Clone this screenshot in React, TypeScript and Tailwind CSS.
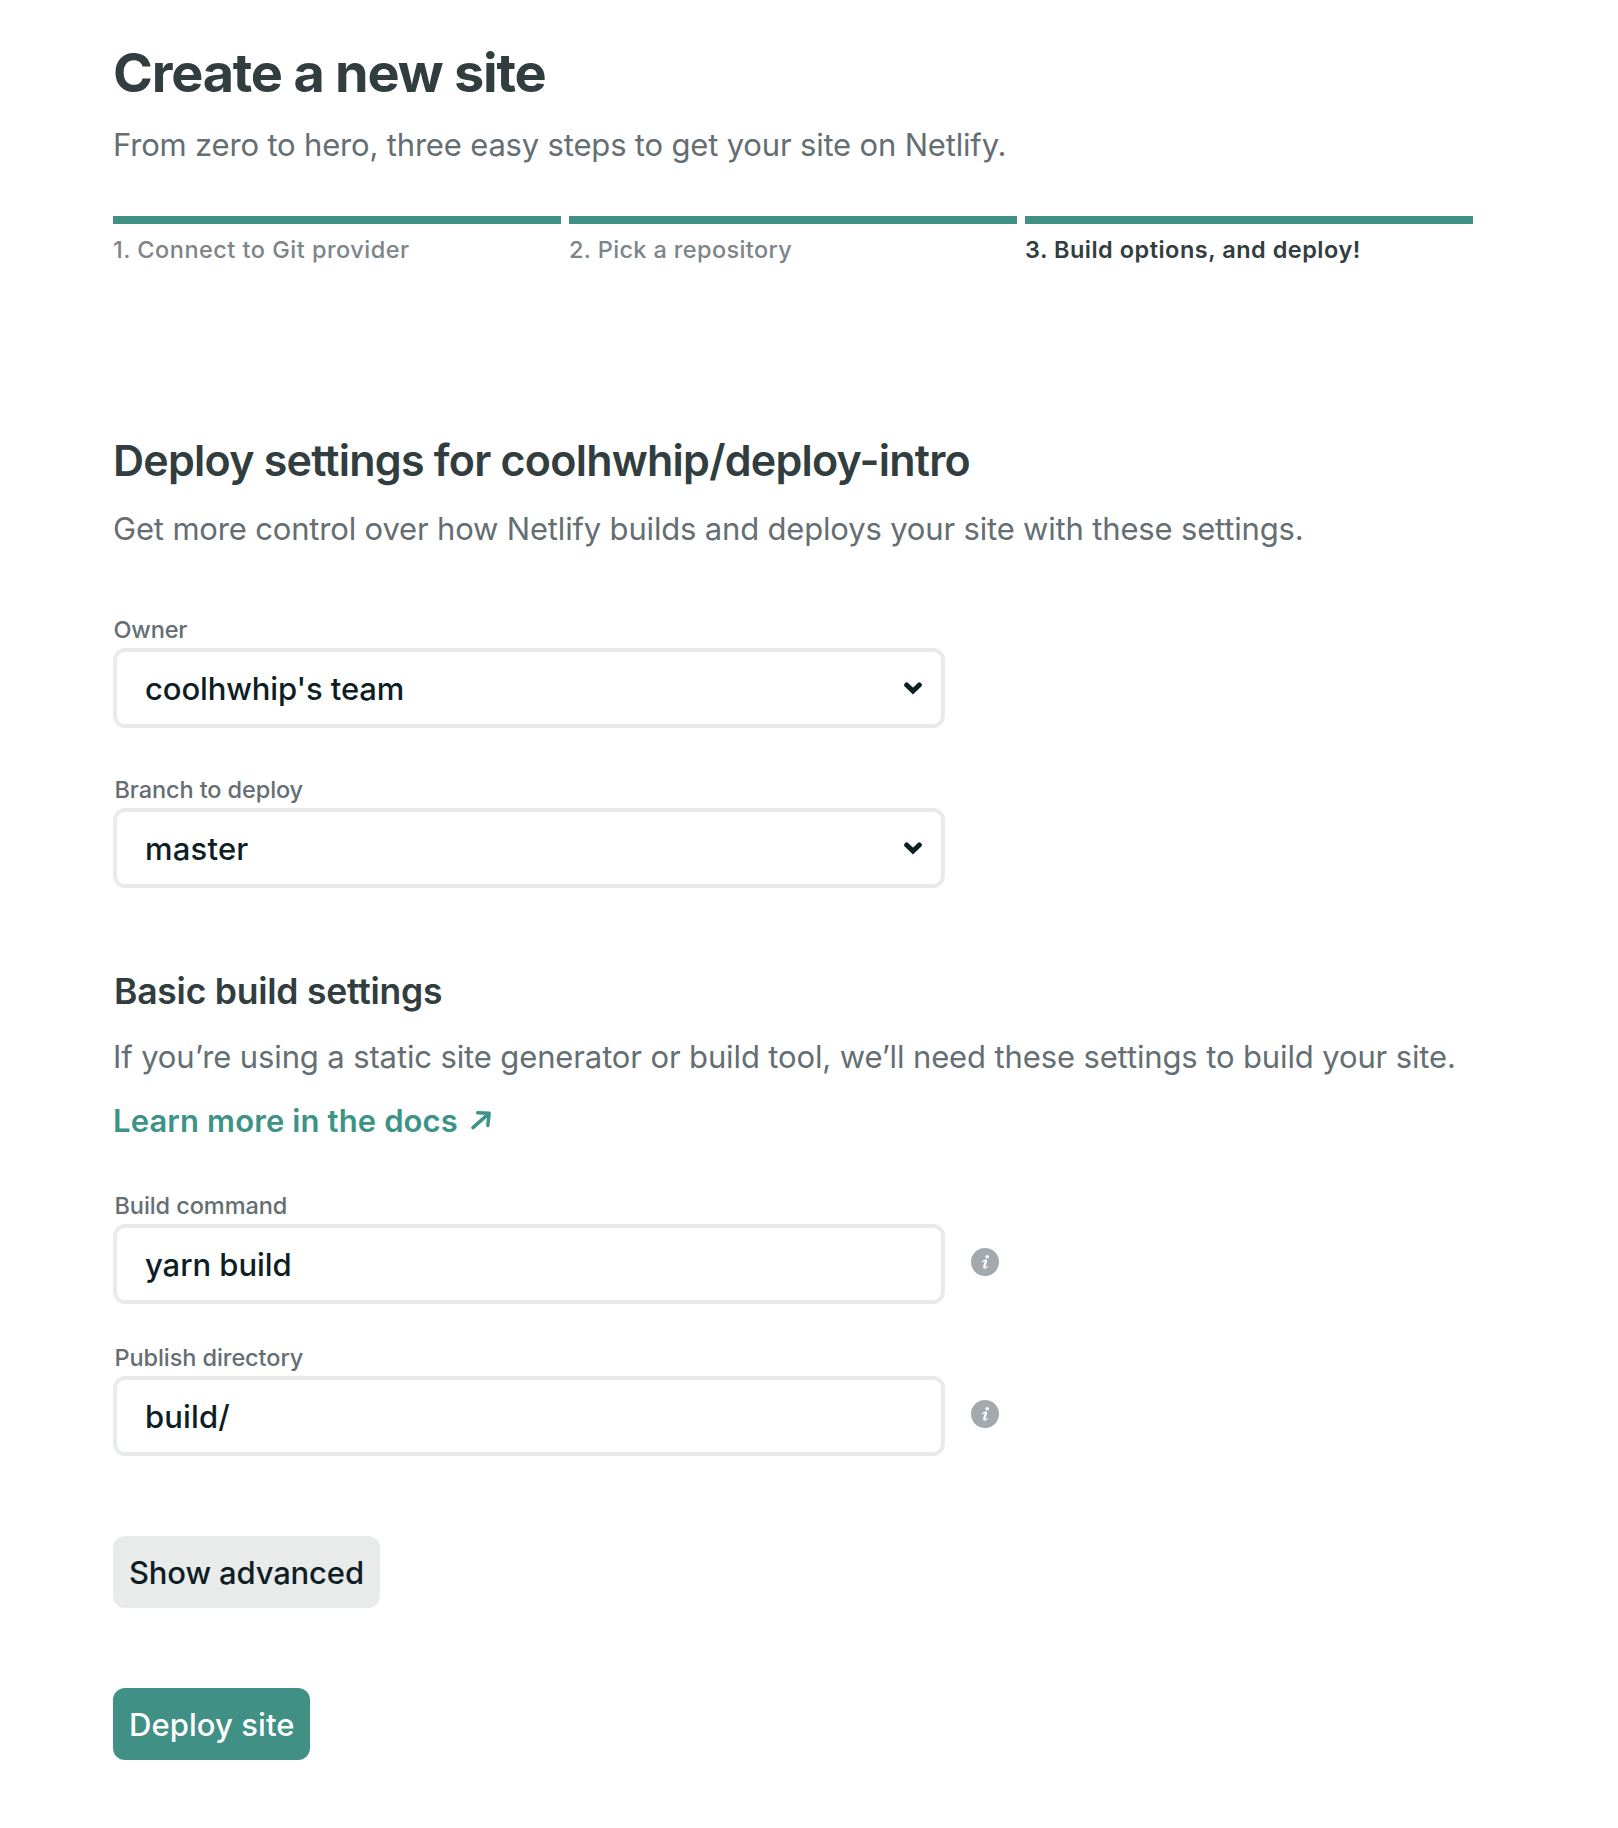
const steps = [
  { label: '1. Connect to Git provider', className: 'font-medium tracking-[0.487px] text-[#7d8589]' },
  { label: '2. Pick a repository', className: 'font-medium tracking-[0.363px] text-[#7d8589]' },
  { label: '3. Build options, and deploy!', className: 'font-semibold tracking-[0.504px] text-[#313d3e]' },
];

const labelClass = 'block pl-[1.5px] text-[23.5px] leading-[31px] font-medium text-[#646e73]';
const boxClass =
  'mt-[3px] h-20 w-[832px] rounded-xl border-4 border-[#e9ebeb] bg-white pt-[13px] pb-3 pl-7 text-[31px] leading-[47px] font-medium text-[#0e1e25]';

function ChevronIcon() {
  return (
    <svg className="mt-[17px] h-[13px] w-[18px]" viewBox="0 0 18 13" fill="none">
      <path d="M2.7 3 9 9l6.3-6" stroke="#0e1e25" strokeWidth="5" strokeLinecap="round" />
    </svg>
  );
}

function ExternalArrowIcon() {
  return (
    <svg className="mt-[13px] ml-3 h-5 w-[22px]" viewBox="0 0 22 20" fill="none">
      <path
        d="M2.9 17.6 18.6 3.9M7.7 2.7l11.5.5-1.4 12.3"
        stroke="#3c9386"
        strokeWidth="3.4"
        strokeLinecap="round"
        strokeLinejoin="round"
      />
    </svg>
  );
}

function InfoIcon() {
  return (
    <svg className="mb-px ml-[26px] size-7" viewBox="0 0 28 28" fill="none">
      <circle cx="14" cy="14" r="14" fill="#a3a9ac" />
      <circle cx="16.2" cy="8.7" r="1.8" fill="#fff" />
      <path d="M11.7 13.6c.9-.9 1.9-1.4 2.9-1.5" stroke="#fff" strokeWidth="1.2" strokeLinecap="round" />
      <path d="M14.9 12.6c.1 1.6-1.7 4.7-1.7 6.6" stroke="#fff" strokeWidth="2.3" strokeLinecap="round" />
      <path d="M13.2 20c1.2.3 2.3-.5 3.1-1.5" stroke="#fff" strokeWidth="1.2" strokeLinecap="round" />
    </svg>
  );
}

function SelectField({ label, value, labelTracking, valueTracking }: { label: string; value: string; labelTracking: string; valueTracking: string }) {
  return (
    <div>
      <span className={`${labelClass} ${labelTracking}`}>{label}</span>
      <button type="button" className={`flex items-start justify-between pr-[19px] text-left ${boxClass} ${valueTracking}`}>
        <span>{value}</span>
        <ChevronIcon />
      </button>
    </div>
  );
}

function TextField({ label, value, labelTracking, valueTracking }: { label: string; value: string; labelTracking: string; valueTracking: string }) {
  return (
    <label className="block">
      <span className={`${labelClass} ${labelTracking}`}>{label}</span>
      <span className="flex items-center">
        <input className={`${boxClass} outline-none ${valueTracking}`} defaultValue={value} />
        <InfoIcon />
      </span>
    </label>
  );
}

export default function App() {
  return (
    <main className="min-h-[1828px] bg-white pt-10 pl-[113px] whitespace-nowrap font-['Inter',sans-serif] text-[#646e73]">
      <header className="w-[1360px]">
        <h1 className="text-[54px] leading-[65px] font-bold tracking-[-1.21px] text-[#313d3e]">Create a new site</h1>
        <p className="mt-4 text-[31px] leading-[47px] tracking-[-0.178px]">
          From zero to hero, three easy steps to get your site on Netlify.
        </p>
        <ol className="mt-12 grid grid-cols-3 gap-2">
          {steps.map((step) => (
            <li key={step.label} className="border-t-8 border-[#409086] pt-2.5">
              <span className={`block text-[23.5px] leading-[31px] ${step.className}`}>{step.label}</span>
            </li>
          ))}
        </ol>
      </header>

      <section className="mt-[169px]">
        <h2 className="text-[43px] leading-[52px] font-semibold tracking-[-0.764px] text-[#313d3e]">
          Deploy settings for coolhwhip/deploy-intro
        </h2>
        <p className="mt-[19px] text-[31px] leading-[47px] tracking-[-0.171px]">
          Get more control over how Netlify builds and deploys your site with these settings.
        </p>
        <div className="mt-[62px] flex flex-col gap-[46px]">
          <SelectField label="Owner" value="coolhwhip's team" labelTracking="-ml-px tracking-[-0.16px]" valueTracking="tracking-[-0.12px]" />
          <SelectField label="Branch to deploy" value="master" labelTracking="tracking-[-0.1px]" valueTracking="tracking-[0.2px]" />
        </div>
      </section>

      <section className="mt-[82px]">
        <h3 className="pl-px text-[35.5px] leading-[43px] font-semibold tracking-[-0.23px] text-[#313d3e]">Basic build settings</h3>
        <p className="mt-5 text-[31px] leading-[47px] tracking-[-0.125px]">
          If you’re using a static site generator or build tool, we’ll need these settings to build your site.
        </p>
        <a className="mt-[17px] flex items-start text-[31px] leading-[47px] font-semibold tracking-[0.124px] text-[#3c9386]">
          Learn more in the docs
          <ExternalArrowIcon />
        </a>
        <div className="mt-[46px] flex flex-col gap-[38px]">
          <TextField label="Build command" value="yarn build" labelTracking="tracking-[-0.074px]" valueTracking="tracking-[-0.052px]" />
          <TextField label="Publish directory" value="build/" labelTracking="tracking-[-0.076px]" valueTracking="tracking-[0.14px]" />
        </div>
      </section>

      <div className="mt-20 flex flex-col items-start gap-20 text-[31px] leading-[47px] font-medium">
        <button type="button" className="h-[72px] w-[267px] rounded-xl bg-[#e9ebeb] pt-[13px] pb-3 pl-4 text-left tracking-[-0.16px] text-[#0e1e25]">
          Show advanced
        </button>
        <button type="button" className="h-[72px] w-[197px] rounded-xl bg-[#409086] pt-[13px] pb-3 pl-4 text-left tracking-[0.066px] text-white">
          Deploy site
        </button>
      </div>
    </main>
  );
}
